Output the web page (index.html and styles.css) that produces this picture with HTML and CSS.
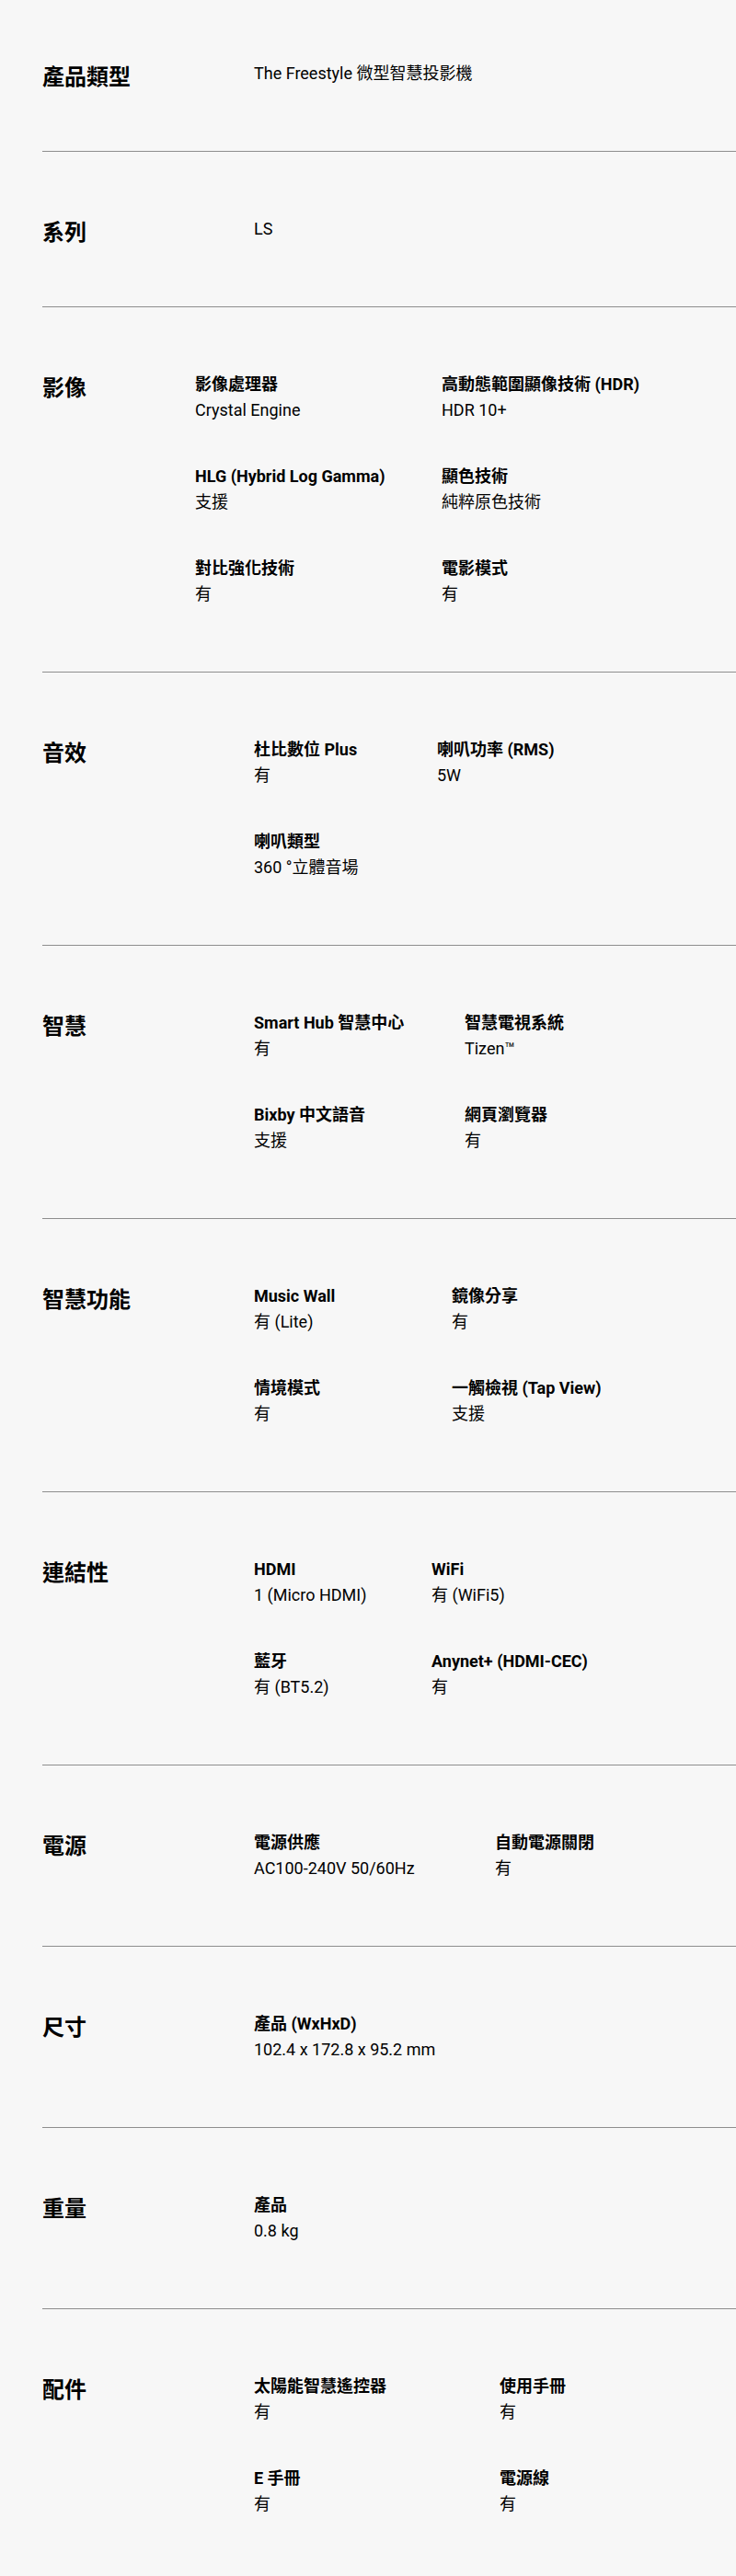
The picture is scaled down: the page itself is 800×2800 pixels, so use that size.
FILE: index.html
```html
<!DOCTYPE html>
<html lang="zh-Hant">
<head>
<meta charset="utf-8">
<title>規格</title>
<link rel="stylesheet" href="styles.css">
</head>
<body>
<main class="specs">
  <section class="spec spec--first">
    <h2 class="spec__title">產品類型</h2>
    <p class="spec__single">The Freestyle 微型智慧投影機</p>
  </section>

  <section class="spec">
    <h2 class="spec__title">系列</h2>
    <p class="spec__single">LS</p>
  </section>

  <section class="spec spec--wide">
    <h2 class="spec__title">影像</h2>
    <div class="spec__items items--image">
      <div class="item"><p class="item__label">影像處理器</p><p class="item__value">Crystal Engine</p></div>
      <div class="item"><p class="item__label">高動態範圍顯像技術 (HDR)</p><p class="item__value">HDR 10+</p></div>
      <div class="item"><p class="item__label">HLG (Hybrid Log Gamma)</p><p class="item__value">支援</p></div>
      <div class="item"><p class="item__label">顯色技術</p><p class="item__value">純粹原色技術</p></div>
      <div class="item"><p class="item__label">對比強化技術</p><p class="item__value">有</p></div>
      <div class="item"><p class="item__label">電影模式</p><p class="item__value">有</p></div>
    </div>
  </section>

  <section class="spec">
    <h2 class="spec__title">音效</h2>
    <div class="spec__items items--sound">
      <div class="item"><p class="item__label">杜比數位 Plus</p><p class="item__value">有</p></div>
      <div class="item"><p class="item__label">喇叭功率 (RMS)</p><p class="item__value">5W</p></div>
      <div class="item"><p class="item__label">喇叭類型</p><p class="item__value">360 °立體音場</p></div>
    </div>
  </section>

  <section class="spec">
    <h2 class="spec__title">智慧</h2>
    <div class="spec__items items--smart">
      <div class="item"><p class="item__label">Smart Hub 智慧中心</p><p class="item__value">有</p></div>
      <div class="item"><p class="item__label">智慧電視系統</p><p class="item__value">Tizen™</p></div>
      <div class="item"><p class="item__label">Bixby 中文語音</p><p class="item__value">支援</p></div>
      <div class="item"><p class="item__label">網頁瀏覽器</p><p class="item__value">有</p></div>
    </div>
  </section>

  <section class="spec">
    <h2 class="spec__title">智慧功能</h2>
    <div class="spec__items items--features">
      <div class="item"><p class="item__label">Music Wall</p><p class="item__value">有 (Lite)</p></div>
      <div class="item"><p class="item__label">鏡像分享</p><p class="item__value">有</p></div>
      <div class="item"><p class="item__label">情境模式</p><p class="item__value">有</p></div>
      <div class="item"><p class="item__label">一觸檢視 (Tap View)</p><p class="item__value">支援</p></div>
    </div>
  </section>

  <section class="spec">
    <h2 class="spec__title">連結性</h2>
    <div class="spec__items items--connect">
      <div class="item"><p class="item__label">HDMI</p><p class="item__value">1 (Micro HDMI)</p></div>
      <div class="item"><p class="item__label">WiFi</p><p class="item__value">有 (WiFi5)</p></div>
      <div class="item"><p class="item__label">藍牙</p><p class="item__value">有 (BT5.2)</p></div>
      <div class="item"><p class="item__label">Anynet+ (HDMI-CEC)</p><p class="item__value">有</p></div>
    </div>
  </section>

  <section class="spec">
    <h2 class="spec__title">電源</h2>
    <div class="spec__items items--power">
      <div class="item"><p class="item__label">電源供應</p><p class="item__value">AC100-240V 50/60Hz</p></div>
      <div class="item"><p class="item__label">自動電源關閉</p><p class="item__value">有</p></div>
    </div>
  </section>

  <section class="spec">
    <h2 class="spec__title">尺寸</h2>
    <div class="spec__items">
      <div class="item"><p class="item__label">產品 (WxHxD)</p><p class="item__value">102.4 x 172.8 x 95.2 mm</p></div>
    </div>
  </section>

  <section class="spec">
    <h2 class="spec__title">重量</h2>
    <div class="spec__items">
      <div class="item"><p class="item__label">產品</p><p class="item__value">0.8 kg</p></div>
    </div>
  </section>

  <section class="spec spec--last">
    <h2 class="spec__title">配件</h2>
    <div class="spec__items items--acc">
      <div class="item"><p class="item__label">太陽能智慧遙控器</p><p class="item__value">有</p></div>
      <div class="item"><p class="item__label">使用手冊</p><p class="item__value">有</p></div>
      <div class="item"><p class="item__label">E 手冊</p><p class="item__value">有</p></div>
      <div class="item"><p class="item__label">電源線</p><p class="item__value">有</p></div>
    </div>
  </section>
</main>
</body>
</html>
```

FILE: styles.css
```css
* {
  box-sizing: border-box;
}

html,
body {
  margin: 0;
  padding: 0;
  background: #f7f7f7;
}

body {
  font-family: Roboto, "Noto Sans CJK TC", sans-serif;
  color: #000;
}

p,
h2 {
  margin: 0;
}

.specs {
  padding-left: 46px;
}

.spec {
  display: grid;
  grid-template-columns: 230px 1fr;
  align-items: start;
  padding: 72px 0 64px;
  border-bottom: 1px solid #8e8e8e;
}

.spec--first {
  padding-top: 68px;
}

.spec--last {
  border-bottom: none;
}

.spec--wide {
  grid-template-columns: 166px 1fr;
}

.spec__title {
  font-size: 24px;
  line-height: 32px;
  font-weight: 700;
}

.spec__single {
  font-size: 18px;
  line-height: 24px;
}

.spec__items {
  display: grid;
  grid-template-columns: auto;
  justify-content: start;
  row-gap: 40px;
}

.items--image { grid-template-columns: 268px auto; }
.items--sound { grid-template-columns: 199px auto; }
.items--smart { grid-template-columns: 229px auto; }
.items--features { grid-template-columns: 215px auto; }
.items--connect { grid-template-columns: 193px auto; }
.items--power { grid-template-columns: 262px auto; }
.items--acc { grid-template-columns: 267px auto; }

.item {
  padding-bottom: 8px;
}

.item__label {
  font-size: 18px;
  line-height: 24px;
  font-weight: 700;
}

.item__value {
  margin-top: 4px;
  font-size: 18px;
  line-height: 24px;
}
```
